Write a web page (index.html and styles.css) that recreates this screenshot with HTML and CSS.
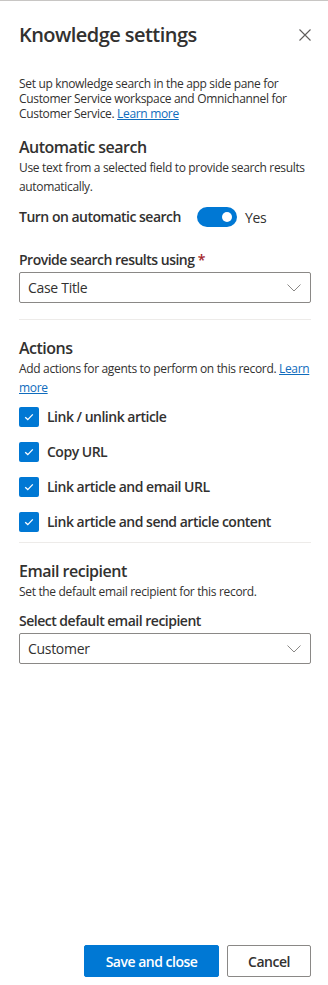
FILE: index.html
```html
<!DOCTYPE html>
<html lang="en">

<head>
  <meta charset="UTF-8">
  <meta name="viewport" content="width=device-width, initial-scale=1.0">
  <link rel="stylesheet" href="styles.css">
  <title>Knowledge settings</title>
</head>

<body>

  <div id="panel">
    <div class="header">
      <h1 class="title">Knowledge settings</h1>
      <button class="close-btn" aria-label="Close">
        <svg width="12" height="12" viewBox="0 0 12 12">
          <path d="M0.5 0.5 L11.5 11.5 M11.5 0.5 L0.5 11.5" stroke="#605e5c" stroke-width="1.1" fill="none" />
        </svg>
      </button>
    </div>

    <p class="intro">Set up knowledge search in the app side pane for Customer Service workspace and Omnichannel for Customer Service. <a href="#">Learn more</a></p>

    <div class="section first">
      <h2 class="section-title">Automatic search</h2>
      <p class="section-desc">Use text from a selected field to provide search results automatically.</p>

      <div class="toggle-row">
        <span class="field-label">Turn on automatic search</span>
        <span class="toggle"><span class="knob"></span></span>
        <span class="toggle-text">Yes</span>
      </div>

      <div class="field">
        <div class="field-label">Provide search results using <span class="required">*</span></div>
        <div class="select">
          <span>Case Title</span>
          <svg width="14" height="8" viewBox="0 0 14 8">
            <path d="M0.5 0.5 L7 7 L13.5 0.5" stroke="#8a8886" stroke-width="1" fill="none" />
          </svg>
        </div>
      </div>
    </div>

    <hr class="divider">

    <div class="section">
      <h2 class="section-title">Actions</h2>
      <p class="section-desc">Add actions for agents to perform on this record. <a href="#">Learn</a> <a href="#">more</a></p>

      <ul class="checks">
        <li><span class="box"><svg width="12" height="12" viewBox="0 0 12 12"><path d="M2.2 6.2 L4.8 8.6 L9.8 3.4" stroke="#fff" stroke-width="1.3" fill="none" /></svg></span>Link / unlink article</li>
        <li><span class="box"><svg width="12" height="12" viewBox="0 0 12 12"><path d="M2.2 6.2 L4.8 8.6 L9.8 3.4" stroke="#fff" stroke-width="1.3" fill="none" /></svg></span>Copy URL</li>
        <li><span class="box"><svg width="12" height="12" viewBox="0 0 12 12"><path d="M2.2 6.2 L4.8 8.6 L9.8 3.4" stroke="#fff" stroke-width="1.3" fill="none" /></svg></span>Link article and email URL</li>
        <li><span class="box"><svg width="12" height="12" viewBox="0 0 12 12"><path d="M2.2 6.2 L4.8 8.6 L9.8 3.4" stroke="#fff" stroke-width="1.3" fill="none" /></svg></span>Link article and send article content</li>
      </ul>
    </div>

    <hr class="divider short">

    <div class="section">
      <h2 class="section-title">Email recipient</h2>
      <p class="section-desc">Set the default email recipient for this record.</p>

      <div class="field second">
        <div class="field-label">Select default email recipient</div>
        <div class="select">
          <span>Customer</span>
          <svg width="14" height="8" viewBox="0 0 14 8">
            <path d="M0.5 0.5 L7 7 L13.5 0.5" stroke="#8a8886" stroke-width="1" fill="none" />
          </svg>
        </div>
      </div>
    </div>

    <div class="footer">
      <button class="btn primary">Save and close</button>
      <button class="btn">Cancel</button>
    </div>
  </div>

</body>

</html>
```

FILE: styles.css
```css
body {
  margin: 0;
  background-color: #fff;
  font-family: 'Open Sans', 'Noto Sans', sans-serif;
  color: #323130;
}

#panel {
  display: flex;
  flex-direction: column;
  min-height: 985px;
  box-sizing: border-box;
  border-top: 1px solid #c8c6c4;
  padding: 0 17px 8px 19px;
}

.header {
  display: flex;
  align-items: center;
  justify-content: space-between;
  margin-top: 21px;
  height: 26px;
}

.title {
  margin: 0;
  font-size: 20px;
  font-weight: 600;
  line-height: 26px;
  letter-spacing: -0.55px;
}

.close-btn {
  background: none;
  border: none;
  padding: 0;
  width: 12px;
  height: 12px;
  display: flex;
  cursor: pointer;
}

.intro {
  margin: 28px 0 0;
  font-size: 12px;
  line-height: 15px;
  letter-spacing: -0.33px;
}

a {
  display: inline-block;
  color: #0f6cbd;
  text-decoration: underline;
}

.section-title {
  margin: 0;
  font-size: 16px;
  font-weight: 600;
  line-height: 22px;
  letter-spacing: -0.5px;
}

.section {
  margin-top: 17px;
}

.section.first {
  margin-top: 15px;
}

.section-desc {
  margin: 0;
  font-size: 12px;
  line-height: 19px;
  letter-spacing: -0.33px;
}

.field-label {
  font-size: 14px;
  font-weight: 600;
  line-height: 20px;
  letter-spacing: -0.5px;
}

.required {
  color: #a4262c;
}

.toggle-row {
  display: flex;
  align-items: center;
  margin-top: 11px;
}

.toggle {
  position: relative;
  width: 40px;
  height: 20px;
  border-radius: 10px;
  background-color: #0078d4;
  margin-left: 16px;
}

.knob {
  position: absolute;
  right: 5px;
  top: 5px;
  width: 10px;
  height: 10px;
  border-radius: 50%;
  background-color: #fff;
}

.toggle-text {
  margin-left: 8px;
  font-size: 14px;
  letter-spacing: -0.3px;
}

.field {
  margin-top: 23px;
}

.field.second {
  margin-top: 10px;
}

.select {
  display: flex;
  align-items: center;
  justify-content: space-between;
  box-sizing: border-box;
  height: 31px;
  margin-top: 2px;
  padding: 0 9px 0 8px;
  border: 1px solid #8a8886;
  border-radius: 2px;
  font-size: 14px;
  letter-spacing: -0.3px;
}

.divider {
  border: none;
  border-top: 1px solid #edebe9;
  margin: 16px 0 0;
}

.divider.short {
  margin-top: 3px;
}

.checks {
  list-style: none;
  margin: 2px 0 0;
  padding: 0;
}

.checks li {
  display: flex;
  align-items: center;
  height: 35px;
  font-size: 14px;
  font-weight: 600;
  letter-spacing: -0.5px;
}

.box {
  display: flex;
  align-items: center;
  justify-content: center;
  width: 20px;
  height: 20px;
  border-radius: 2px;
  background-color: #0078d4;
  margin-right: 8px;
}

.footer {
  display: flex;
  justify-content: flex-end;
  gap: 8px;
  margin-top: auto;
}

.btn {
  height: 32px;
  padding: 0;
  font-family: inherit;
  font-size: 14px;
  font-weight: 600;
  letter-spacing: -0.5px;
  white-space: nowrap;
  color: #323130;
  background-color: #fff;
  border: 1px solid #8a8886;
  border-radius: 2px;
  width: 84px;
}

.btn.primary {
  background-color: #0078d4;
  border-color: #0078d4;
  color: #fff;
  width: 135px;
}
```
